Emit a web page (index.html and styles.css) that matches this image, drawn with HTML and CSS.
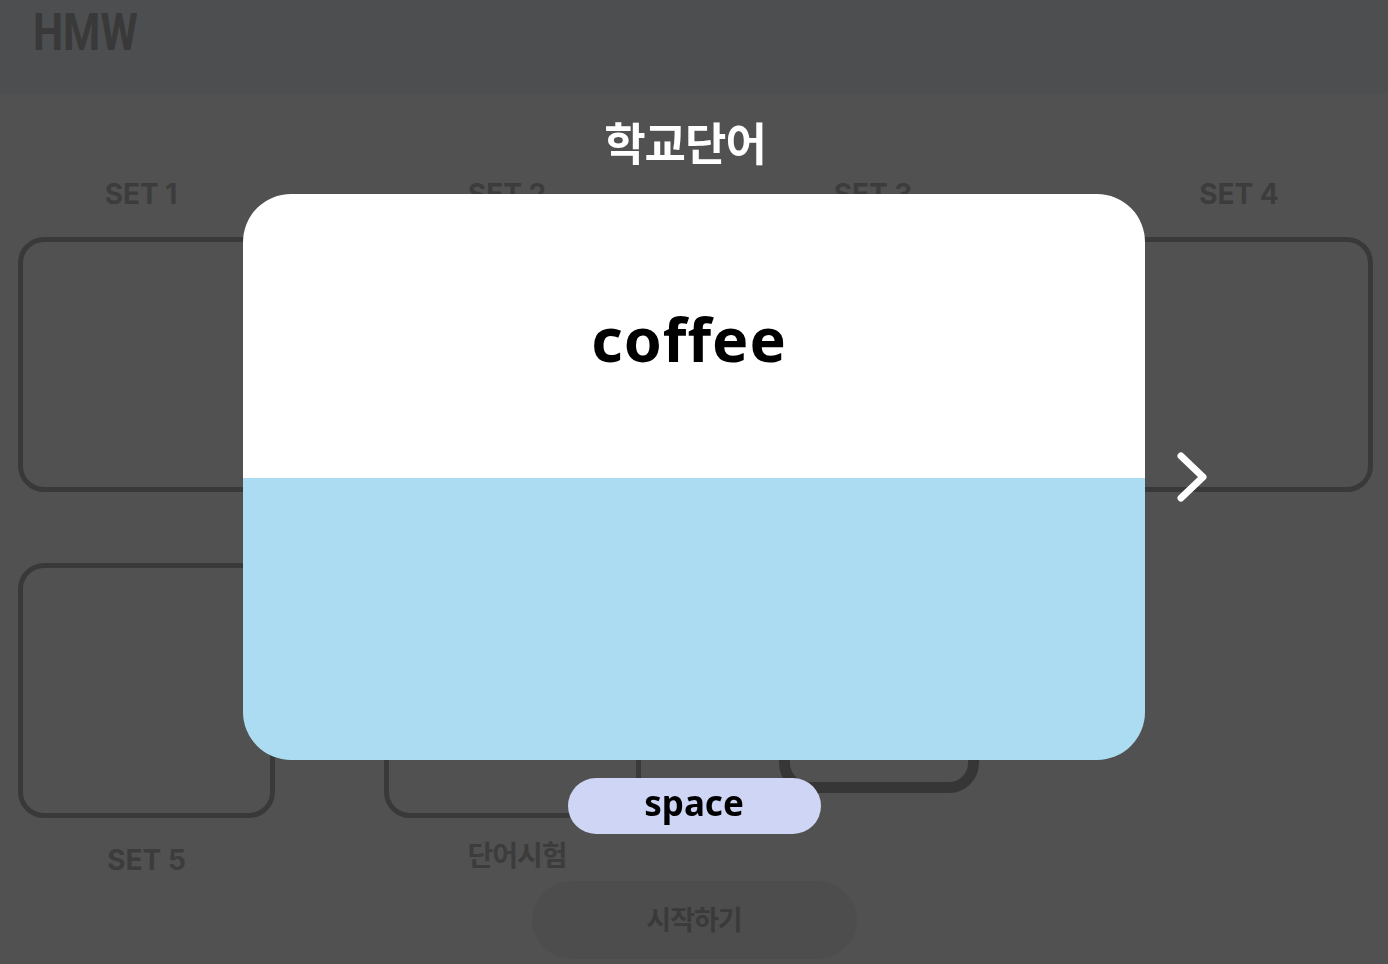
FILE: index.html
```html
<html>
<head>
<link rel="stylesheet" href="styles.css">
</head>
<body>
<div class="top">
  <span class="logo">HMW</span>
</div>

<div class="sets">
  <div class="set"><div class="setName">SET 1</div><div class="box"></div></div>
  <div class="set"><div class="setName">SET 2</div><div class="box"></div></div>
  <div class="set"><div class="setName">SET 3</div><div class="box"></div></div>
  <div class="set"><div class="setName">SET 4</div><div class="box"></div></div>
</div>

<div class="sets low">
  <div class="set"><div class="box"></div><div class="setName">SET 5</div></div>
  <div class="set"><div class="box"></div><div class="setName kr">단어시험</div></div>
  <div class="set"><div class="box picked"></div></div>
</div>

<div class="startRow"><button class="start">시작하기</button></div>

<!-- word popup -->
<div class="dim">
  <div class="wordTitle">학교단어</div>
  <div class="cardWrap">
    <div class="card">
      <div class="front">coffee</div>
      <div class="back"></div>
    </div>
    <span class="next" title="next word">
      <svg width="40" height="56" viewBox="0 0 40 56"><polyline points="9,7 31,28 9,49" fill="none" stroke="#fff" stroke-width="7" stroke-linecap="round" stroke-linejoin="round"/></svg>
    </span>
  </div>
  <button class="space">space</button>
</div>
</body>
</html>
```

FILE: styles.css
```css
* {box-sizing: border-box;}
body {margin:0; height:964px; overflow:hidden; background:#fff;
  font-family: Inter, "Noto Sans CJK KR", sans-serif;}
.top {height:94px; background:#eef4fa; padding:0 33px;}
.logo {display:inline-block; font-family:Roboto, sans-serif; font-weight:700;
  font-size:52px; line-height:66px; color:#b5b5b5;
  transform:scaleX(0.82); transform-origin:left center;}

.sets {display:grid; grid-template-columns: repeat(4, 257px); column-gap:109px;
  padding:82px 18px 0;}
.sets.low {padding-top:71px;}
.set {display:flex; flex-direction:column; align-items:center;}
.setName {font-size:28px; font-weight:700; line-height:36px; color:#bdbdbd;
  margin-bottom:25px; padding-right:11px;}
.low .setName {margin:24px 0 0; padding:0;}
.low .setName.kr {font-size:28px; letter-spacing:-1px; margin-top:20px; padding-left:9px;}
.box {width:257px; height:255px; border:5px solid #b5b5b5; border-radius:26px;}
.box.picked {width:200px; height:230px; border:11px solid #a9a9a9; border-radius:30px;}

.startRow {display:flex; justify-content:center; margin-top:3px;}
.start {width:325px; height:78px; border:none; border-radius:39px; background:#f3f3f3;
  font-family:"Noto Sans CJK KR", sans-serif; font-weight:700; font-size:27px;
  letter-spacing:-1px; color:#b8b8b8; padding-bottom:5px;}

.dim {position:fixed; top:0; left:0; right:0; bottom:0; background:rgba(0,0,0,0.682);
  display:flex; flex-direction:column; align-items:center; padding-top:114px;}
.wordTitle {font-family:"Noto Sans CJK KR", sans-serif; font-weight:700; font-size:45px;
  letter-spacing:-1px; line-height:56px; color:#fff; margin-bottom:24px; padding-right:18px;}
.cardWrap {position:relative;}
.card {width:902px; height:566px; border-radius:48px; overflow:hidden;
  display:flex; flex-direction:column;}
.front {height:284px; background:#fff; display:flex; align-items:center; justify-content:center;
  font-family:"Noto Sans", sans-serif; font-weight:700; font-size:61px; letter-spacing:1px;
  color:#000; padding-right:10px; padding-top:4px;}
.back {flex:1; background:#acdcf1;}
.next {position:absolute; top:255px; right:-67px; cursor:pointer;}
.space {margin-top:18px; width:253px; height:56px; border:none; border-radius:28px;
  background:#ced5f5; font-family:"Noto Sans", sans-serif; font-weight:700; font-size:35px;
  line-height:50px; color:#000; padding:0 0 6px;}
```
